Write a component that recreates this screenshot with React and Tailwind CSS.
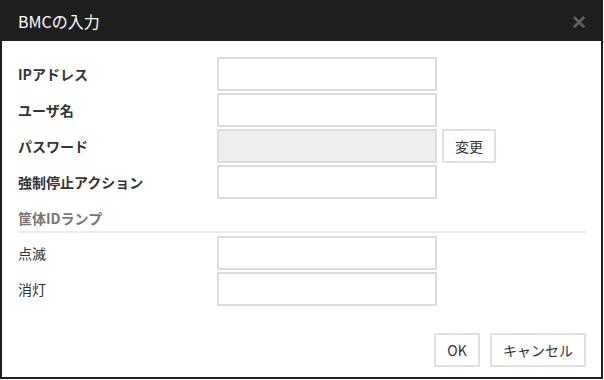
export default function App() {
  const rows = [
    { label: "IPアドレス" },
    { label: "ユーザ名" },
    { label: "パスワード", disabled: true, button: "変更" },
    { label: "強制停止アクション" },
  ];
  const lampRows = ["点滅", "消灯"];

  return (
    <div
      className="w-[604px] h-[380px] bg-white"
      style={{ fontFamily: '"Noto Sans CJK JP", "Noto Sans", sans-serif' }}
    >
      <div className="w-[603px] h-[379px] border-x-2 border-b-2 border-[#1e1e1e] flex flex-col">
        {/* title bar */}
        <div className="h-[41px] bg-[#1e1e1e] flex items-center justify-between pl-4 pr-[14px]">
          <span className="text-white text-[16px]">BMCの入力</span>
          <span className="text-[#5e5e5e] text-[19px] font-bold leading-none">✕</span>
        </div>

        <div className="flex-1 flex flex-col pl-4 pr-[15px] pt-4">
          <div className="flex flex-col gap-[2px]">
            {rows.map((r) => (
              <div key={r.label} className="flex items-center h-[34px]">
                <div className="w-[199px] text-[14px] font-bold text-[#333]">{r.label}</div>
                <div
                  className={
                    "w-[220px] h-[34px] border-2 border-[#dcdcdc] " +
                    (r.disabled ? "bg-[#eeeeee]" : "bg-white")
                  }
                />
                {r.button && (
                  <button className="ml-[5px] w-[54px] h-[34px] border-2 border-[#e0e0e0] bg-white text-[14px] text-[#333]">
                    {r.button}
                  </button>
                )}
              </div>
            ))}
          </div>

          <div className="mt-[9px] pb-[3px] border-b-2 border-[#ececec] text-[14px] font-bold text-[#777] leading-[20px]">
            筐体IDランプ
          </div>

          <div className="mt-[3px] flex flex-col gap-[2px]">
            {lampRows.map((l) => (
              <div key={l} className="flex items-center h-[34px]">
                <div className="w-[199px] text-[14px] text-[#333]">{l}</div>
                <div className="w-[220px] h-[34px] border-2 border-[#dcdcdc] bg-white" />
              </div>
            ))}
          </div>

          <div className="mt-[27px] flex justify-end gap-[10px]">
            <button className="w-[46px] h-[34px] border-2 border-[#e0e0e0] bg-white text-[14px] text-[#333]">
              OK
            </button>
            <button className="w-[96px] h-[34px] border-2 border-[#e0e0e0] bg-white text-[14px] text-[#333]">
              キャンセル
            </button>
          </div>
        </div>
      </div>
    </div>
  );
}
